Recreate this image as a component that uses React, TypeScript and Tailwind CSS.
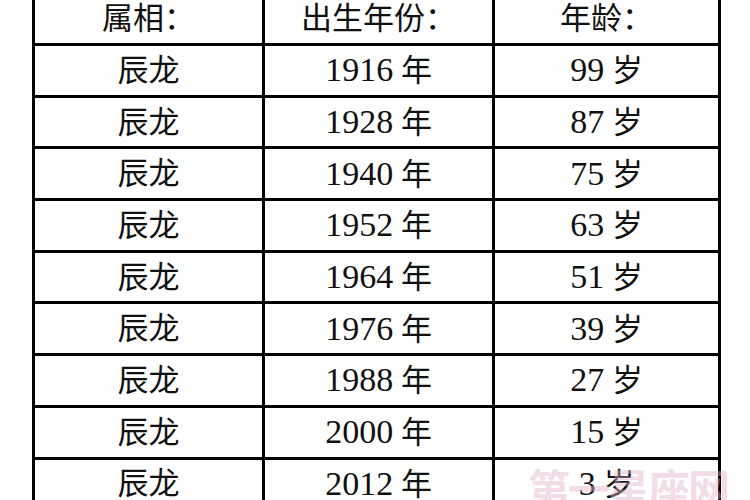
import React from 'react';

const rows = [
  { year: '1916', age: '99' },
  { year: '1928', age: '87' },
  { year: '1940', age: '75' },
  { year: '1952', age: '63' },
  { year: '1964', age: '51' },
  { year: '1976', age: '39' },
  { year: '1988', age: '27' },
  { year: '2000', age: '15' },
  { year: '2012', age: '3' },
];

const font = { fontFamily: '"Liberation Serif", "Noto Sans CJK SC", serif' };

export default function App() {
  return (
    <div className="relative w-[750px] h-[500px] overflow-hidden bg-white" style={font}>
      <table className="-mt-[9px] ml-[32px] table-fixed border-collapse text-[31px] leading-none text-[#111]">
        <colgroup>
          <col className="w-[230px]" />
          <col className="w-[230px]" />
          <col className="w-[226px]" />
        </colgroup>
        <thead>
          <tr className="h-[52px]">
            <th className="border-[3px] border-black font-normal">属相：</th>
            <th className="border-[3px] border-black font-normal">出生年份：</th>
            <th className="border-[3px] border-black font-normal">年龄：</th>
          </tr>
        </thead>
        <tbody>
          {rows.map((r) => (
            <tr key={r.year} className="h-[51.7px]">
              <td className="border-[3px] border-black text-center">辰龙</td>
              <td className="border-[3px] border-black text-center">
                <span className="text-[34px]">{r.year}</span> 年
              </td>
              <td className="border-[3px] border-black text-center">
                <span className="text-[34px]">{r.age}</span> 岁
              </td>
            </tr>
          ))}
        </tbody>
      </table>

      {/* watermark */}
      <div className="absolute left-[528px] top-[470px] text-[42px] font-bold leading-none tracking-[-2px] text-[#e2b3cb] opacity-45 pointer-events-none">
        第一星座网
      </div>
    </div>
  );
}
